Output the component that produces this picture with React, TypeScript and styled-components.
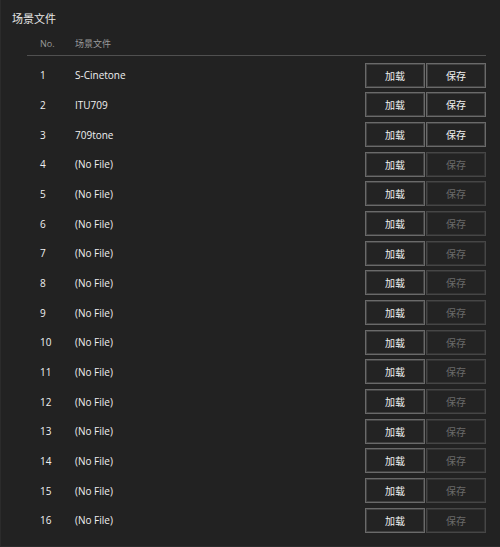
import React from "react";
import styled, { createGlobalStyle } from "styled-components";

const GlobalStyle = createGlobalStyle`
  html, body {
    margin: 0;
    padding: 0;
    background: #222222;
  }
  body {
    font-family: "Open Sans", "Noto Sans CJK SC", sans-serif;
    -webkit-font-smoothing: antialiased;
  }
`;

const Page = styled.div`
  width: 500px;
  height: 547px;
  box-sizing: border-box;
  padding: 11px 14px 0 11px;
  background: #222222;
  border-left: 1px solid #2b2b2b;
  border-bottom: 1px solid #2b2b2b;
  overflow: hidden;
`;

const Title = styled.div`
  font-family: "Noto Sans CJK SC", sans-serif;
  font-size: 11px;
  line-height: 14px;
  color: #e6e6e6;
`;

const Table = styled.div`
  margin: 6px 0 0 15px;
`;

const HeaderRow = styled.div`
  display: flex;
  align-items: center;
  height: 24px;
  border-bottom: 1px solid #505050;
  color: #9a9a9a;
  font-size: 9px;
`;

const Body = styled.div`
  padding-top: 4.5px;
`;

const Row = styled.div`
  display: flex;
  align-items: center;
  height: 29.67px;
  color: #f0f0f0;
  font-size: 10px;
`;

const NoCell = styled.div`
  width: 35px;
  padding-left: 13px;
  box-sizing: content-box;
  flex: none;
`;

const NameCell = styled.div<{ $cjk?: boolean }>`
  flex: 1;
  font-family: ${(p) => (p.$cjk ? `"Noto Sans CJK SC", sans-serif` : `"Open Sans", "Noto Sans CJK SC", sans-serif`)};
`;

const Buttons = styled.div`
  display: flex;
  gap: 1px;
`;

const Button = styled.button<{ $disabled?: boolean }>`
  width: 60px;
  height: 25px;
  box-sizing: border-box;
  padding: 0;
  background: #232323;
  border: 1px solid ${(p) => (p.$disabled ? "#464646" : "#6a6a6a")};
  box-shadow: inset 0 0 0 1px ${(p) => (p.$disabled ? "#333333" : "#414141")};
  color: ${(p) => (p.$disabled ? "#6a6a6a" : "#f0f0f0")};
  font-family: "Noto Sans CJK SC", sans-serif;
  font-size: 10px;
  cursor: ${(p) => (p.$disabled ? "default" : "pointer")};
`;

const files = ["S-Cinetone", "ITU709", "709tone"];

export default function App() {
  const rows = Array.from({ length: 16 }, (_, i) => ({
    no: i + 1,
    name: files[i] ?? "(No File)",
    saved: i < files.length,
  }));

  return (
    <>
      <GlobalStyle />
      <Page>
        <Title>场景文件</Title>
        <Table>
          <HeaderRow>
            <NoCell>No.</NoCell>
            <NameCell $cjk>场景文件</NameCell>
          </HeaderRow>
          <Body>
            {rows.map((r) => (
              <Row key={r.no}>
                <NoCell>{r.no}</NoCell>
                <NameCell>{r.name}</NameCell>
                <Buttons>
                  <Button>加载</Button>
                  <Button $disabled={!r.saved}>保存</Button>
                </Buttons>
              </Row>
            ))}
          </Body>
        </Table>
      </Page>
    </>
  );
}
